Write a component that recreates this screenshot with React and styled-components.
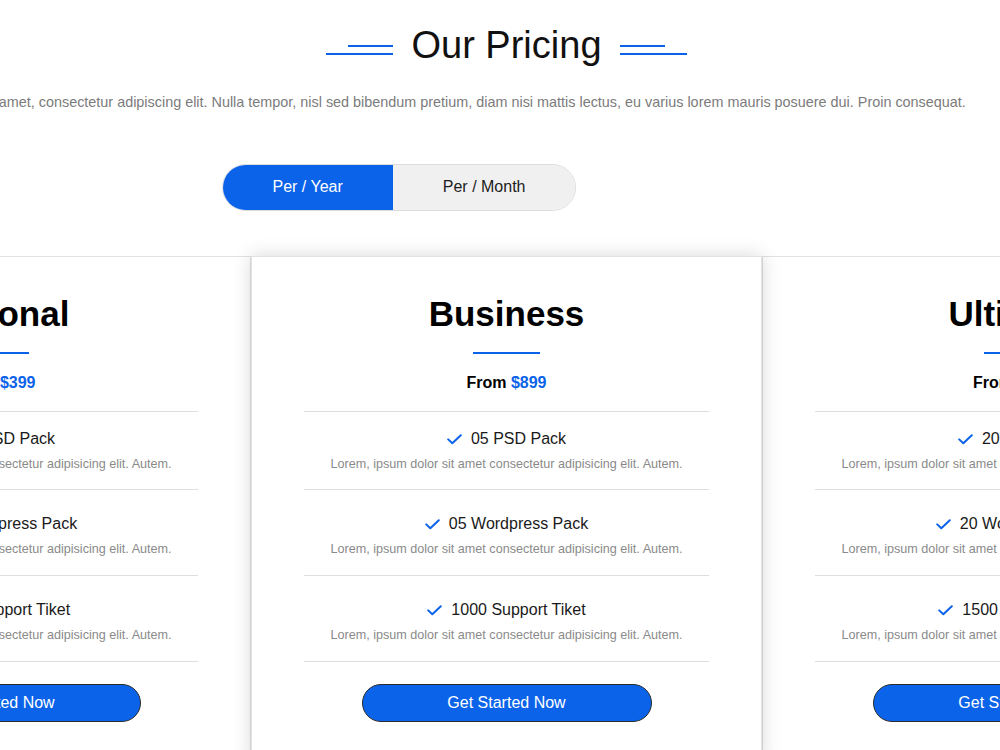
import React, { useState } from "react";
import styled, { createGlobalStyle } from "styled-components";

const BLUE = "#0b63e9";

const GlobalStyle = createGlobalStyle`
  html, body {
    margin: 0;
    padding: 0;
    background: #fff;
    overflow: hidden;
  }

  body {
    font-family: "Liberation Sans", Arial, sans-serif;
    color: #111;
  }
`;

const plans = [
  {
    name: "Personal",
    price: "$399",
    features: ["01 PSD Pack", "01 Wordpress Pack", "500 Support Tiket"]
  },
  {
    name: "Business",
    price: "$899",
    featured: true,
    features: ["05 PSD Pack", "05 Wordpress Pack", "1000 Support Tiket"]
  },
  {
    name: "Ultimate",
    price: "$1299",
    features: ["20 PSD Pack", "20 Wordpress Pack", "1500 Support Tiket"]
  }
];

const StyledSection = styled.section`
  width: 1533px;
  margin-left: -260px;
  padding-top: 24px;
  display: flex;
  flex-direction: column;
  align-items: center;
`;

const StyledHeading = styled.div`
  display: flex;
  align-items: center;
  gap: 18px;
`;

const StyledTitle = styled.h1`
  margin: 0;
  font-size: 38px;
  line-height: 1.15;
  font-weight: 400;
  color: #111;
`;

const StyledDeco = styled.div`
  width: 67px;
  margin-top: 8px;
  display: flex;
  flex-direction: column;
  align-items: ${props => (props.side === "left" ? "flex-end" : "flex-start")};
  gap: 6px;

  span {
    display: block;
    height: 2px;
    background: ${BLUE};
  }

  span:first-child {
    width: 45px;
  }

  span:last-child {
    width: 67px;
  }
`;

const StyledIntro = styled.p`
  margin: 24px 190px 0 0;
  font-size: 14.4px;
  line-height: 20px;
  color: #7b7b7b;
  white-space: nowrap;
`;

const StyledToggle = styled.div`
  margin: 52px 215px 0 0;
  display: flex;
  border: 1px solid #dcdcdc;
  border-radius: 30px;
  overflow: hidden;
`;

const StyledToggleButton = styled.button`
  height: 45px;
  padding: 0 50px;
  border: none;
  font-family: inherit;
  font-size: 16px;
  cursor: pointer;
  background: ${props => (props.active ? BLUE : "#f0f0f0")};
  color: ${props => (props.active ? "#fff" : "#1c1c1c")};
`;

const StyledCards = styled.div`
  margin-top: 45px;
  display: grid;
  grid-template-columns: repeat(3, 511px);
`;

const StyledCard = styled.div`
  position: relative;
  z-index: ${props => (props.featured ? 1 : 0)};
  background: #fff;
  border: 1px solid #e2e2e2;
  box-shadow: ${props =>
    props.featured ? "0 0 18px rgba(0, 0, 0, 0.16)" : "none"};
  padding: 37px 52px 40px;
  display: flex;
  flex-direction: column;
  align-items: center;
  text-align: center;
`;

const StyledPlanName = styled.h2`
  margin: 0;
  font-size: 35px;
  line-height: 1.15;
  font-weight: 700;
  color: #000;
`;

const StyledUnderline = styled.div`
  width: 67px;
  height: 2px;
  margin-top: 18px;
  background: ${BLUE};
`;

const StyledPrice = styled.div`
  margin-top: 20px;
  font-size: 16px;
  line-height: 1.15;
  font-weight: 700;
  color: #000;

  span {
    color: ${BLUE};
  }
`;

const StyledFeatures = styled.ul`
  list-style: none;
  margin: 19px 0 0;
  padding: 0;
  width: 100%;
  border-top: 1px solid #dedede;
`;

const StyledFeature = styled.li`
  padding: 25px 0 19px;
  border-bottom: 1px solid #dedede;

  &:first-child {
    padding: 18px 0 18px;
  }
`;

const StyledFeatureName = styled.div`
  display: flex;
  align-items: center;
  justify-content: center;
  gap: 9px;
  font-size: 16px;
  line-height: 18px;
  color: #1a1a1a;
`;

const StyledFeatureText = styled.p`
  margin: 9px 0 0;
  font-size: 12.6px;
  line-height: 14px;
  color: #8a8a8a;
`;

const StyledCta = styled.button`
  margin-top: 22px;
  width: 290px;
  height: 38px;
  border: 1px solid #2c2c2c;
  border-radius: 20px;
  background: ${BLUE};
  color: #fff;
  font-family: inherit;
  font-size: 16px;
  cursor: pointer;
`;

const CheckIcon = () => (
  <svg width="15" height="11" viewBox="0 0 15 11" fill="none">
    <polyline
      points="1.2,5.4 5.3,9.3 13.8,1.2"
      stroke={BLUE}
      strokeWidth="2"
      strokeLinecap="round"
      strokeLinejoin="round"
    />
  </svg>
);

const PricingCard = ({ plan }) => (
  <StyledCard featured={plan.featured}>
    <StyledPlanName>{plan.name}</StyledPlanName>
    <StyledUnderline />
    <StyledPrice>
      From <span>{plan.price}</span>
    </StyledPrice>
    <StyledFeatures>
      {plan.features.map(feature => (
        <StyledFeature key={feature}>
          <StyledFeatureName>
            <CheckIcon />
            {feature}
          </StyledFeatureName>
          <StyledFeatureText>
            Lorem, ipsum dolor sit amet consectetur adipisicing elit. Autem.
          </StyledFeatureText>
        </StyledFeature>
      ))}
    </StyledFeatures>
    <StyledCta>Get Started Now</StyledCta>
  </StyledCard>
);

const App = () => {
  const [period, setPeriod] = useState("year");

  return (
    <>
      <GlobalStyle />
      <StyledSection>
        <StyledHeading>
          <StyledDeco side="left">
            <span />
            <span />
          </StyledDeco>
          <StyledTitle>Our Pricing</StyledTitle>
          <StyledDeco side="right">
            <span />
            <span />
          </StyledDeco>
        </StyledHeading>
        <StyledIntro>
          Lorem ipsum dolor sit amet, consectetur adipiscing elit. Nulla tempor,
          nisl sed bibendum pretium, diam nisi mattis lectus, eu varius lorem
          mauris posuere dui. Proin consequat.
        </StyledIntro>
        <StyledToggle>
          <StyledToggleButton
            active={period === "year"}
            onClick={() => setPeriod("year")}
          >
            Per / Year
          </StyledToggleButton>
          <StyledToggleButton
            active={period === "month"}
            onClick={() => setPeriod("month")}
          >
            Per / Month
          </StyledToggleButton>
        </StyledToggle>
        <StyledCards>
          {plans.map(plan => (
            <PricingCard key={plan.name} plan={plan} />
          ))}
        </StyledCards>
      </StyledSection>
    </>
  );
};

export default App;
